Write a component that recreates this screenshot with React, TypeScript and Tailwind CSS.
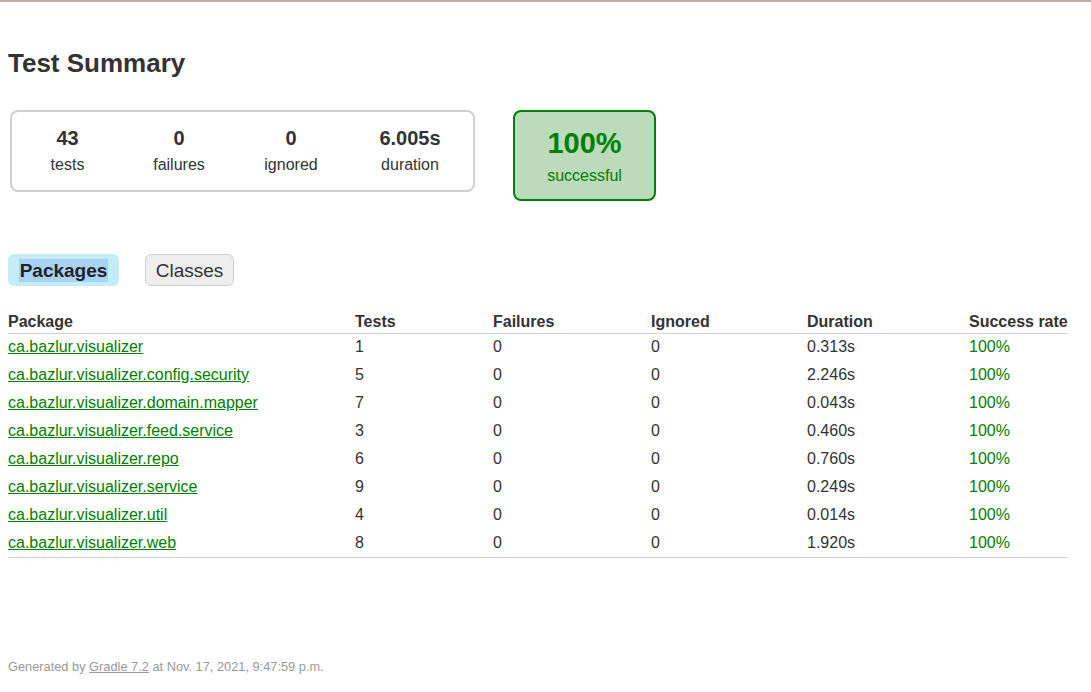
const packages = [
  { name: "ca.bazlur.visualizer", tests: 1, duration: "0.313s" },
  { name: "ca.bazlur.visualizer.config.security", tests: 5, duration: "2.246s" },
  { name: "ca.bazlur.visualizer.domain.mapper", tests: 7, duration: "0.043s" },
  { name: "ca.bazlur.visualizer.feed.service", tests: 3, duration: "0.460s" },
  { name: "ca.bazlur.visualizer.repo", tests: 6, duration: "0.760s" },
  { name: "ca.bazlur.visualizer.service", tests: 9, duration: "0.249s" },
  { name: "ca.bazlur.visualizer.util", tests: 4, duration: "0.014s" },
  { name: "ca.bazlur.visualizer.web", tests: 8, duration: "1.920s" },
];

const counters = [
  { value: "43", label: "tests", width: "w-[111px]" },
  { value: "0", label: "failures", width: "w-[112px]" },
  { value: "0", label: "ignored", width: "w-[112px]" },
  { value: "6.005s", label: "duration", width: "w-[126px]" },
];

export default function App() {
  return (
    <div className="min-h-[692px] bg-white font-['Liberation_Sans',Arial,sans-serif] text-[#333]">
      <div className="h-[2px] bg-[#bcaea6]" />
      <div className="px-2">
        <h1 className="mt-[46px] text-[26px] font-bold leading-[30px] text-[#333]">
          Test Summary
        </h1>

        <div className="mt-[32px] flex items-start">
          <div className="ml-[2px] flex h-[82px] w-[465px] rounded-[8px] border-2 border-[#d0d0d0]">
            {counters.map((c) => (
              <div key={c.label} className={`${c.width} pt-[14px] text-center`}>
                <div className="text-[20px] font-bold leading-[24px]">{c.value}</div>
                <div className="mt-[5px] text-[16px] leading-[20px]">{c.label}</div>
              </div>
            ))}
          </div>
          <div className="ml-[38px] h-[91px] w-[143px] rounded-[8px] border-2 border-[#008000] bg-[#bbdbbb] pt-[14px] text-center text-[#008000]">
            <div className="text-[29px] font-bold leading-[34px]">100%</div>
            <div className="mt-[6px] text-[16px] leading-[20px]">successful</div>
          </div>
        </div>

        <div className="mt-[53px] flex gap-[26px]">
          <div className="flex h-[32px] w-[111px] items-center justify-center rounded-[6px] bg-[#c3eef7]">
            <span className="bg-[#a8d3f7] px-[1px] text-[19px] font-bold leading-[23px] text-[#222]">
              Packages
            </span>
          </div>
          <div className="flex h-[32px] w-[89px] items-center justify-center rounded-[6px] border border-[#cfcfcf] bg-[#eeeeee] text-[19px] leading-[23px] text-[#333]">
            Classes
          </div>
        </div>

        <table className="mt-[26px] w-[1060px] border-collapse text-[16px] leading-[20px]">
          <thead>
            <tr className="h-[21px] border-b border-[#d4d4d4] text-left">
              <th className="w-[347px] p-0 align-top font-bold">Package</th>
              <th className="w-[138px] p-0 align-top font-bold">Tests</th>
              <th className="w-[158px] p-0 align-top font-bold">Failures</th>
              <th className="w-[156px] p-0 align-top font-bold">Ignored</th>
              <th className="w-[162px] p-0 align-top font-bold">Duration</th>
              <th className="p-0 align-top font-bold">Success rate</th>
            </tr>
          </thead>
          <tbody className="border-b border-[#d4d4d4]">
            {packages.map((p) => (
              <tr key={p.name} className="h-[28px]">
                <td className="p-0">
                  <a href="#" className="text-[#008000] underline">
                    {p.name}
                  </a>
                </td>
                <td className="p-0">{p.tests}</td>
                <td className="p-0">0</td>
                <td className="p-0">0</td>
                <td className="p-0">{p.duration}</td>
                <td className="p-0 text-[#008000]">100%</td>
              </tr>
            ))}
          </tbody>
        </table>

        <p className="mt-[101px] text-[12.8px] leading-[16px] text-[#999]">
          Generated by{" "}
          <a href="#" className="text-[#999] underline">
            Gradle 7.2
          </a>{" "}
          at Nov. 17, 2021, 9:47:59 p.m.
        </p>
      </div>
    </div>
  );
}
